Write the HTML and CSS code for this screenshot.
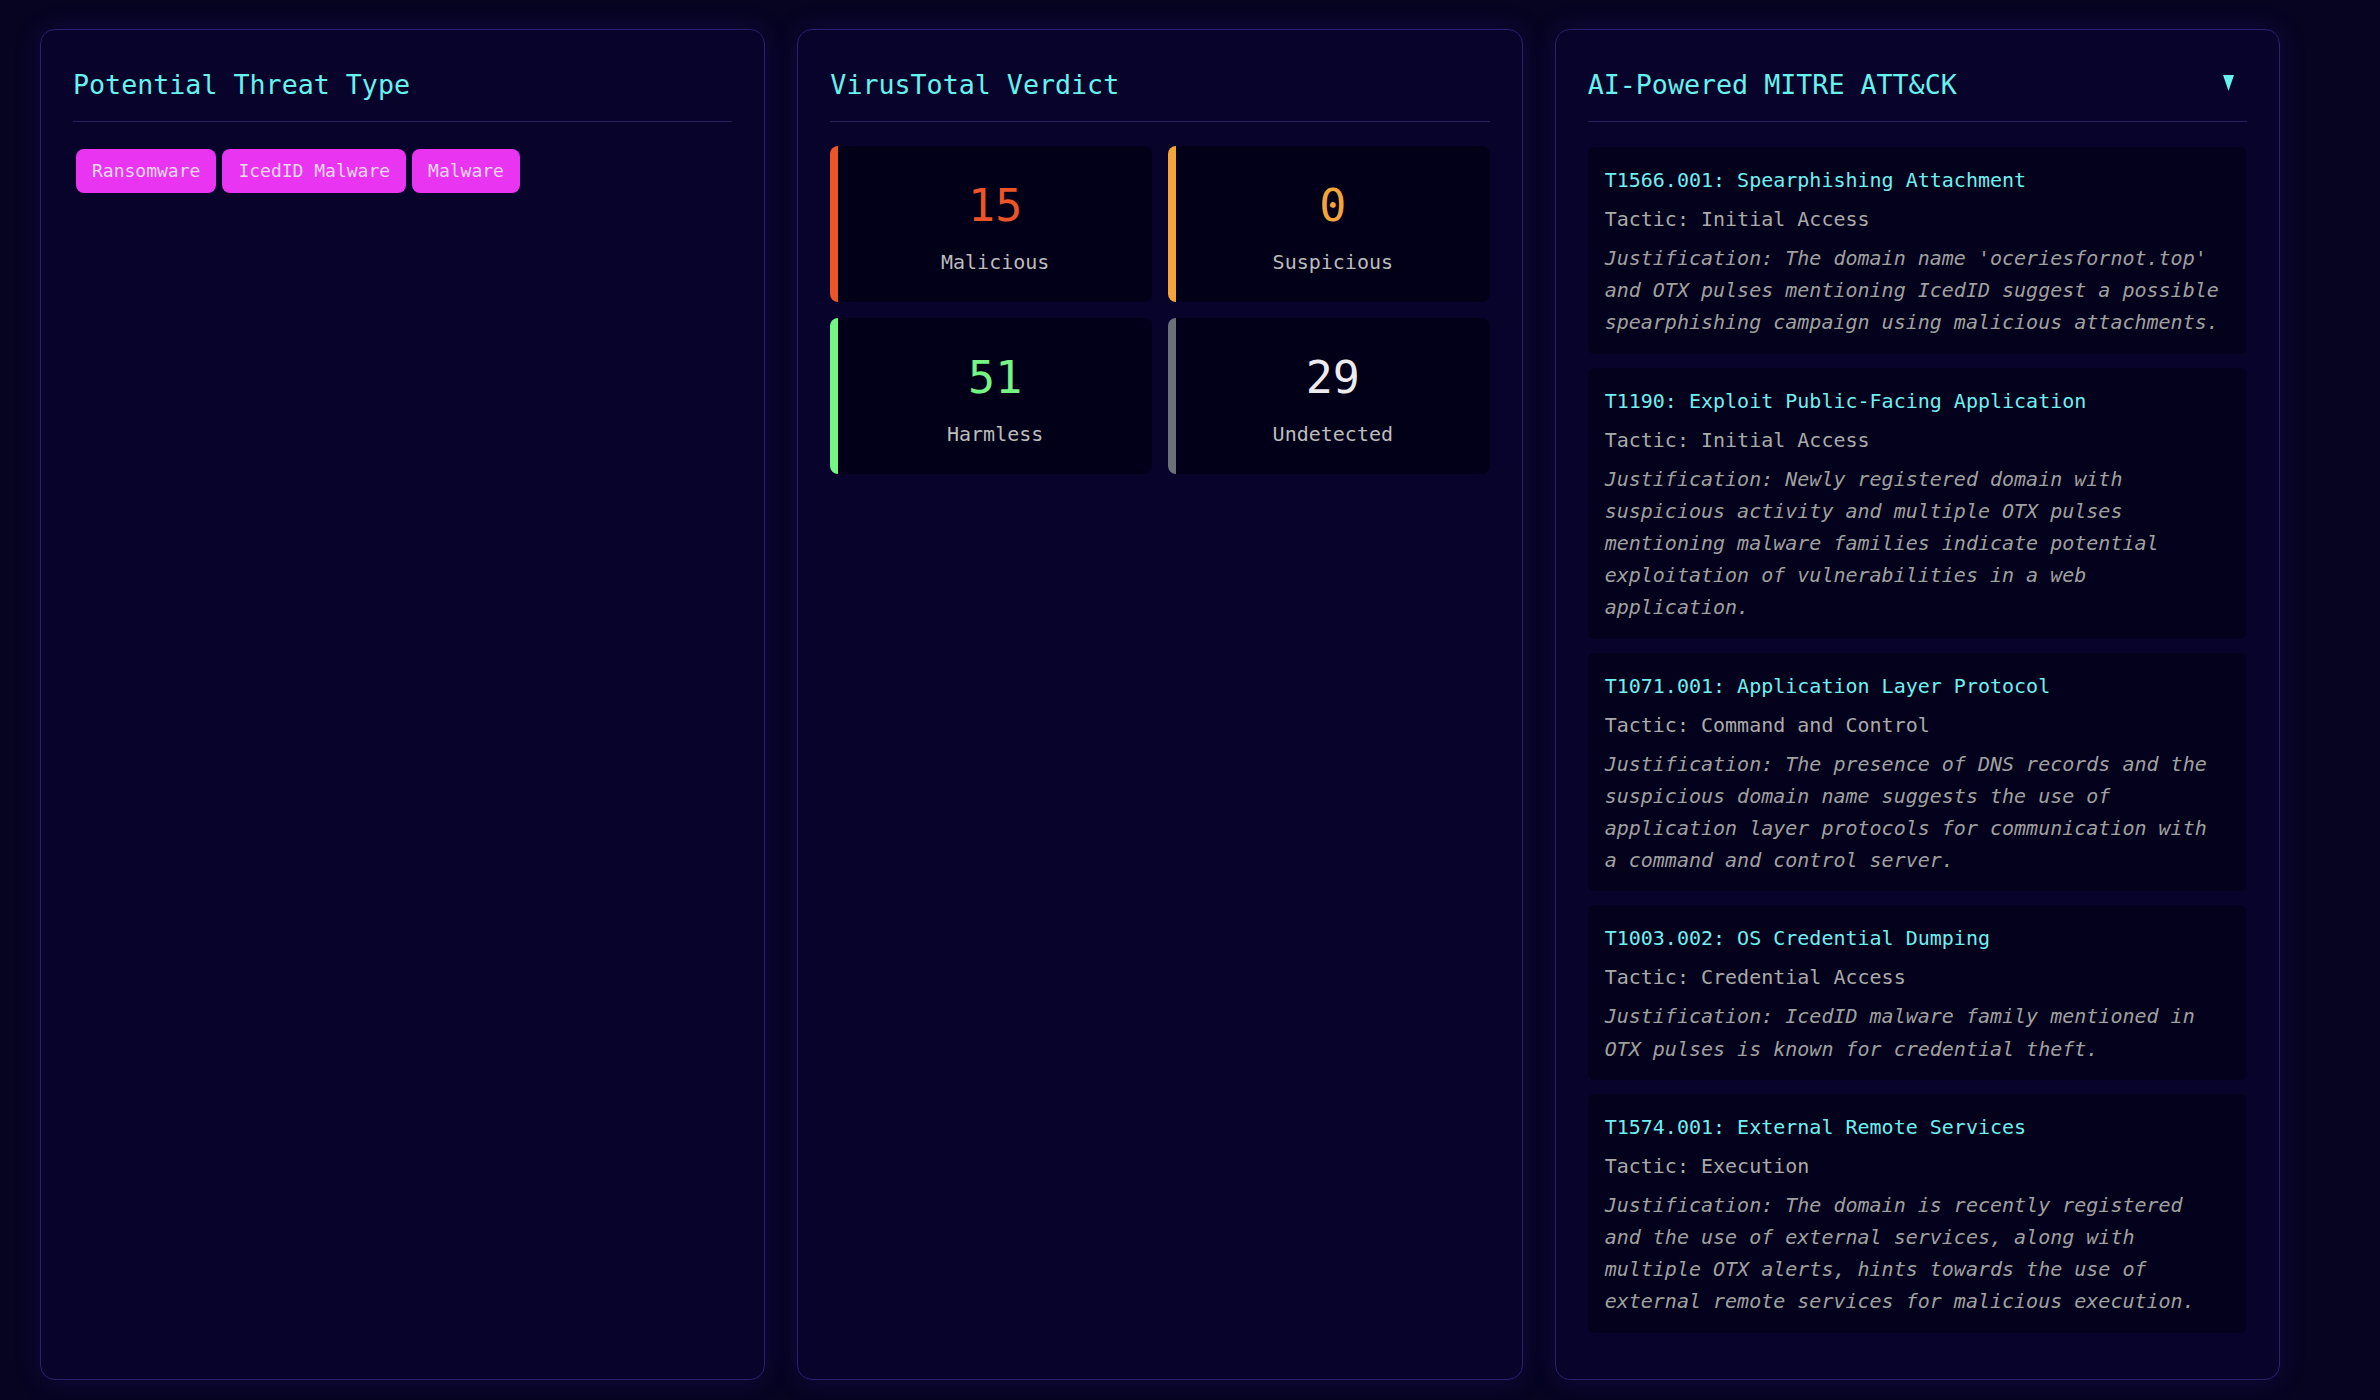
FILE: index.html
```html
<!DOCTYPE html>
<html lang="en">
<head>
<meta charset="utf-8">
<title>Threat Intelligence</title>
<link rel="stylesheet" href="styles.css">
</head>
<body>
<main class="dashboard">
  <section class="panel">
    <h2 class="panel-title"><span>Potential Threat Type</span></h2>
    <div class="tags">
      <span class="tag">Ransomware</span>
      <span class="tag">IcedID Malware</span>
      <span class="tag">Malware</span>
    </div>
  </section>

  <section class="panel">
    <h2 class="panel-title"><span>VirusTotal Verdict</span></h2>
    <div class="verdict-grid">
      <div class="verdict verdict-malicious">
        <div class="verdict-num">15</div>
        <div class="verdict-label">Malicious</div>
      </div>
      <div class="verdict verdict-suspicious">
        <div class="verdict-num">0</div>
        <div class="verdict-label">Suspicious</div>
      </div>
      <div class="verdict verdict-harmless">
        <div class="verdict-num">51</div>
        <div class="verdict-label">Harmless</div>
      </div>
      <div class="verdict verdict-undetected">
        <div class="verdict-num">29</div>
        <div class="verdict-label">Undetected</div>
      </div>
    </div>
  </section>

  <section class="panel">
    <h2 class="panel-title">
      <span>AI-Powered MITRE ATT&amp;CK</span>
      <button class="toggle" type="button" aria-label="Collapse">
        <svg width="11" height="16" viewBox="0 0 11 16"><polygon points="0,0 11,0 5.5,16" fill="#66f2ee"/></svg>
      </button>
    </h2>
    <div class="techniques">
      <article class="technique">
        <h3 class="tech-title">T1566.001: Spearphishing Attachment</h3>
        <p class="tech-tactic">Tactic: Initial Access</p>
        <p class="tech-just">Justification: The domain name 'oceriesfornot.top' and OTX pulses mentioning IcedID suggest a possible spearphishing campaign using malicious attachments.</p>
      </article>
      <article class="technique">
        <h3 class="tech-title">T1190: Exploit Public-Facing Application</h3>
        <p class="tech-tactic">Tactic: Initial Access</p>
        <p class="tech-just">Justification: Newly registered domain with suspicious activity and multiple OTX pulses mentioning malware families indicate potential exploitation of vulnerabilities in a web application.</p>
      </article>
      <article class="technique">
        <h3 class="tech-title">T1071.001: Application Layer Protocol</h3>
        <p class="tech-tactic">Tactic: Command and Control</p>
        <p class="tech-just">Justification: The presence of DNS records and the suspicious domain name suggests the use of application layer protocols for communication with a command and control server.</p>
      </article>
      <article class="technique">
        <h3 class="tech-title">T1003.002: OS Credential Dumping</h3>
        <p class="tech-tactic">Tactic: Credential Access</p>
        <p class="tech-just">Justification: IcedID malware family mentioned in OTX pulses is known for credential theft.</p>
      </article>
      <article class="technique">
        <h3 class="tech-title">T1574.001: External Remote Services</h3>
        <p class="tech-tactic">Tactic: Execution</p>
        <p class="tech-just">Justification: The domain is recently registered and the use of external services, along with multiple OTX alerts, hints towards the use of external remote services for malicious execution.</p>
      </article>
    </div>
  </section>
</main>
</body>
</html>
```

FILE: styles.css
```css
* {
  box-sizing: border-box;
}

html,
body {
  margin: 0;
  padding: 0;
}

body {
  background: #060421;
  font-family: "DejaVu Sans Mono", "Liberation Mono", monospace;
  color: #c0c0c0;
  min-height: 1400px;
}

.dashboard {
  display: grid;
  grid-template-columns: repeat(3, 1fr);
  gap: 32px;
  width: 2240px;
  margin-left: 40px;
  padding-top: 29px;
  align-items: stretch;
}

.panel {
  background: #07032a;
  border: 1px solid #2a206c;
  border-radius: 15px;
  padding: 32px;
  box-shadow: 0 0 26px rgba(60, 30, 170, 0.22);
}

.panel-title {
  display: flex;
  justify-content: space-between;
  align-items: center;
  margin: 0 0 24px;
  padding-bottom: 13px;
  border-bottom: 1px solid #28215e;
  font-size: 26.67px;
  line-height: 46px;
  font-weight: normal;
  color: #66f2ee;
}

.toggle {
  background: none;
  border: 0;
  padding: 0 13px 4px 0;
  margin: 0;
  line-height: 0;
  cursor: pointer;
}

/* Threat tags */
.tags {
  display: flex;
  flex-wrap: wrap;
  gap: 6px;
  padding: 3px;
}

.tag {
  background: #e934f2;
  color: #efd9f2;
  font-size: 18px;
  line-height: 24px;
  padding: 10px 16px;
  border-radius: 8px;
}

/* VirusTotal verdict */
.verdict-grid {
  display: grid;
  grid-template-columns: 1fr 1fr;
  gap: 16px;
}

.verdict {
  background: #020018;
  border-radius: 8px;
  border-left: 8px solid #6c757d;
  padding: 24px 16px;
  text-align: center;
}

.verdict-num {
  font-size: 45px;
  line-height: 72px;
}

.verdict-label {
  margin-top: 4px;
  font-size: 20px;
  line-height: 32px;
  color: #bcbcbc;
}

.verdict-malicious {
  border-left-color: #ec5528;
}
.verdict-malicious .verdict-num {
  color: #ec5528;
}

.verdict-suspicious {
  border-left-color: #f4a53a;
}
.verdict-suspicious .verdict-num {
  color: #f4a53a;
}

.verdict-harmless {
  border-left-color: #74f584;
}
.verdict-harmless .verdict-num {
  color: #74f584;
}

.verdict-undetected {
  border-left-color: #6b7179;
}
.verdict-undetected .verdict-num {
  color: #ececf0;
}

/* MITRE techniques */
.techniques {
  padding-top: 1px;
}

.technique {
  background: #03011b;
  border: 1px solid #04021f;
  border-radius: 6px;
  padding: 16px 16px 14px;
  margin-bottom: 14px;
}

.tech-title {
  margin: 0 0 7px;
  font-size: 20px;
  line-height: 32px;
  font-weight: normal;
  color: #6ef0f0;
}

.tech-tactic {
  margin: 0 0 7px;
  font-size: 20px;
  line-height: 32px;
  color: #aaaaaa;
}

.tech-just {
  margin: 0;
  font-size: 20px;
  line-height: 32.2px;
  font-style: italic;
  color: #a0a0a0;
}
```
